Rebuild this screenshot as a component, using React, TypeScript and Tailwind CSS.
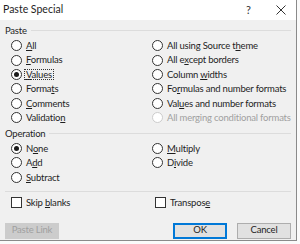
import React from "react";

type Opt = { label: React.ReactNode; checked?: boolean; disabled?: boolean; focus?: boolean };

const u = (s: string, i: number) => (
  <>
    {s.slice(0, i)}
    <span className="underline underline-offset-1">{s[i]}</span>
    {s.slice(i + 1)}
  </>
);

const Radio = ({ label, checked, disabled, focus }: Opt) => (
  <div className="flex h-[14.4px] items-center gap-[3px] whitespace-nowrap">
    <span
      className={`flex h-[11px] w-[11px] shrink-0 items-center justify-center rounded-full border bg-white ${
        disabled ? "border-[#cccccc]" : "border-[#333333]"
      }`}
    >
      {checked && <span className="h-[5px] w-[5px] rounded-full bg-[#1a1a1a]" />}
    </span>
    <span
      className={`${disabled ? "text-[#a0a0a0]" : "text-[#1e1e1e]"} ${
        focus ? "outline outline-1 outline-dotted outline-[#333]" : ""
      } px-[1px] leading-none`}
    >
      {label}
    </span>
  </div>
);

const Check = ({ label }: { label: React.ReactNode }) => (
  <div className="flex h-[14px] items-center gap-[4px] whitespace-nowrap">
    <span className="h-[11px] w-[11px] shrink-0 border border-[#333333] bg-white" />
    <span className="leading-none text-[#1e1e1e]">{label}</span>
  </div>
);

const Group = ({ title }: { title: string }) => (
  <div className="flex items-center gap-[4px] text-[#1e1e1e]">
    <span className="leading-none">{title}</span>
    <span className="h-px flex-1 bg-[#dcdcdc]" />
  </div>
);

export default function App() {
  return (
    <div className="h-[244px] w-[300px] bg-[#fafafa]" style={{ fontFamily: "Lato, sans-serif" }}>
      <div className="flex h-[241px] w-[297px] flex-col border-b border-r border-[#8a8a8a] bg-[#f0f0f0] text-[9.5px] tracking-[-0.2px]">
        <div className="flex h-[20px] items-center bg-white pl-[3px] pr-[10px] tracking-normal">
          <span className="flex-1 text-[10.5px] text-[#1e1e1e]">Paste Special</span>
          <span className="mr-[25px] text-[11px] text-[#333]">?</span>
          <svg width="10" height="10" viewBox="0 0 10 10">
            <path d="M0.5 0.5 L9.5 9.5 M9.5 0.5 L0.5 9.5" stroke="#333" strokeWidth="1" />
          </svg>
        </div>
        <div className="flex flex-1 flex-col px-[5px] pt-[6px]">
          <Group title="Paste" />
          <div className="mt-[3px] grid grid-cols-[141px_1fr] pl-[6px]">
            <div className="flex flex-col">
              <Radio label={u("All", 0)} />
              <Radio label={u("Formulas", 0)} />
              <Radio label={u("Values", 0)} checked focus />
              <Radio label={u("Formats", 5)} />
              <Radio label={u("Comments", 0)} />
              <Radio label={u("Validation", 9)} />
            </div>
            <div className="flex flex-col">
              <Radio label={u("All using Source theme", 18)} />
              <Radio label={u("All except borders", 5)} />
              <Radio label={u("Column widths", 7)} />
              <Radio label={u("Formulas and number formats", 2)} />
              <Radio label={u("Values and number formats", 3)} />
              <Radio label="All merging conditional formats" disabled />
            </div>
          </div>
          <div className="mt-[4px]">
            <Group title="Operation" />
          </div>
          <div className="mt-[3px] grid grid-cols-[141px_1fr] pl-[6px]">
            <div className="flex flex-col">
              <Radio label={u("None", 1)} checked />
              <Radio label={u("Add", 1)} />
              <Radio label={u("Subtract", 0)} />
            </div>
            <div className="flex flex-col">
              <Radio label={u("Multiply", 0)} />
              <Radio label={u("Divide", 1)} />
            </div>
          </div>
          <div className="mt-[6px] h-px bg-[#dcdcdc]" />
          <div className="mt-[4px] grid grid-cols-[144px_1fr] pl-[6px]">
            <Check label={u("Skip blanks", 5)} />
            <Check label={u("Transpose", 8)} />
          </div>
          <div className="mt-[13px] flex items-center">
            <div className="flex h-[16px] w-[54px] items-center justify-center border border-[#cccccc] bg-[#cccccc] text-[#a0a0a0]">
              Paste Link
            </div>
            <div className="ml-auto flex h-[16px] w-[54px] items-center justify-center border-2 border-[#0078d7] bg-[#e1e1e1] text-[#1e1e1e]">
              OK
            </div>
            <div className="ml-[10px] flex h-[16px] w-[54px] items-center justify-center border border-[#adadad] bg-[#e1e1e1] text-[#1e1e1e]">
              Cancel
            </div>
          </div>
        </div>
      </div>
    </div>
  );
}
